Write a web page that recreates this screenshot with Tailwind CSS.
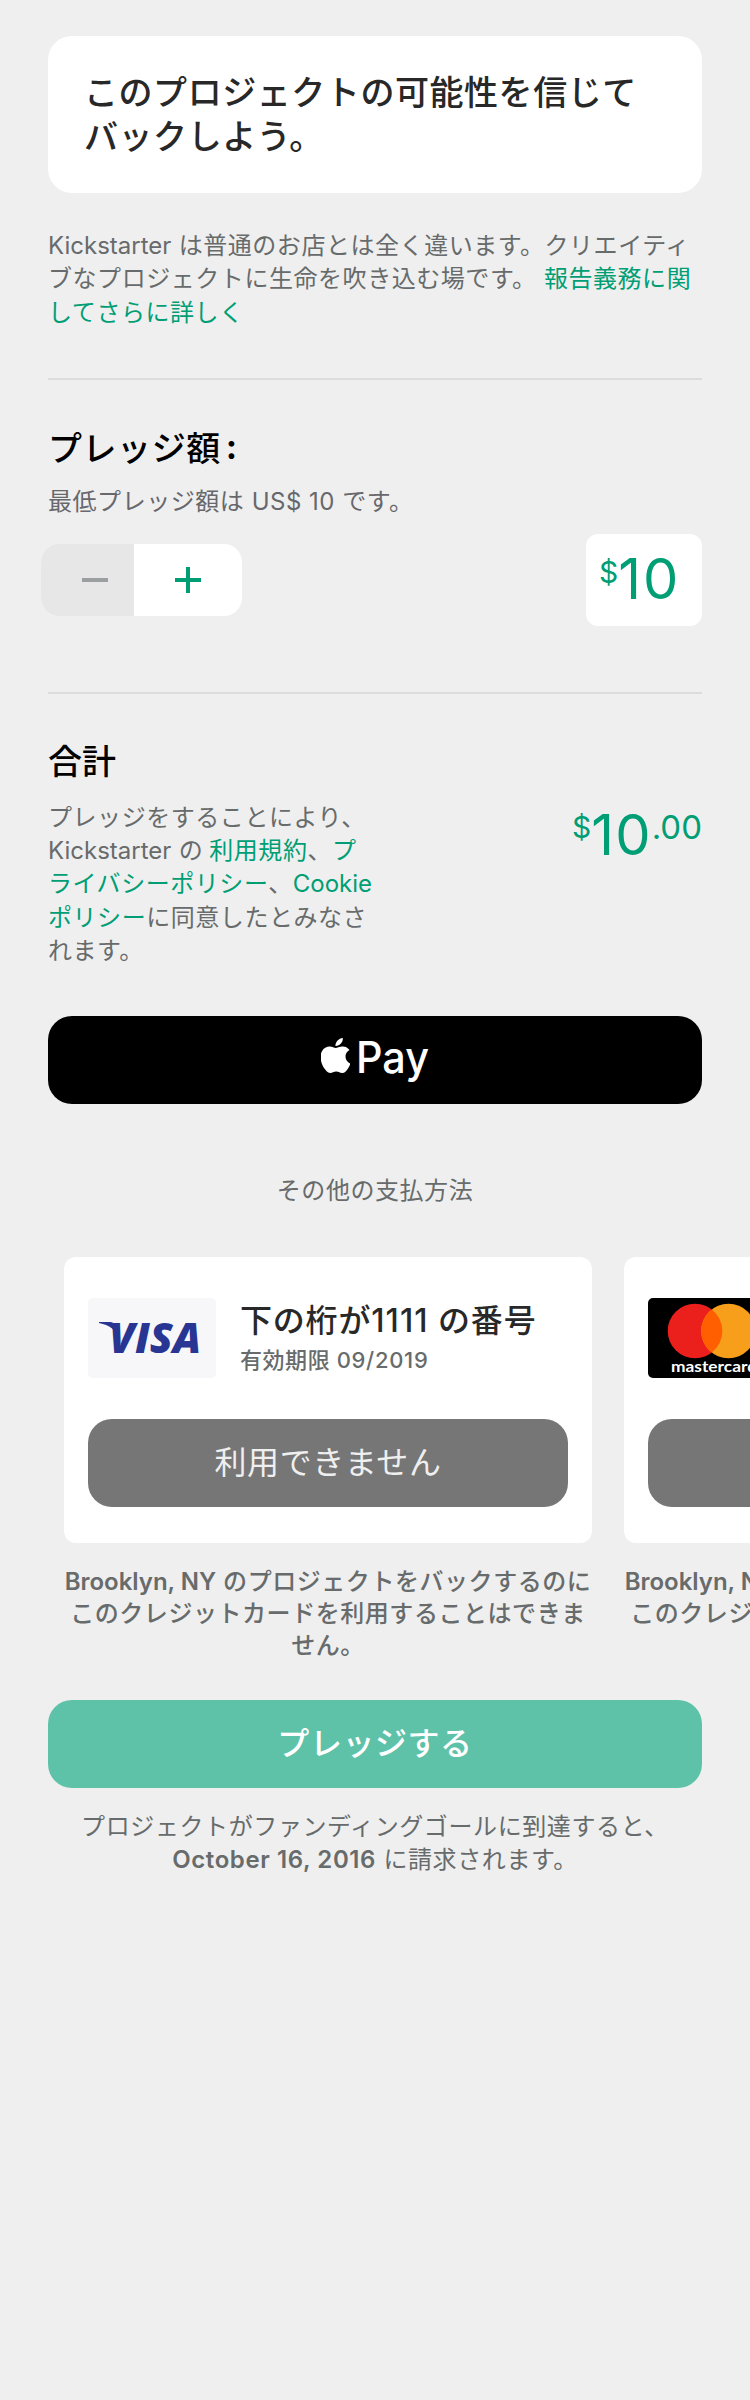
<!DOCTYPE html>
<html lang="ja">
<head>
<meta charset="utf-8">
<title>プレッジ</title>
<script src="https://cdn.jsdelivr.net/npm/@tailwindcss/browser@4"></script>
</head>
<body class="bg-[#efefef]">
<main class="w-[750px] h-[2400px] overflow-hidden bg-[#efefef] pt-9 font-['Inter','Noto_Sans_CJK_JP',sans-serif] text-2xl tracking-[0.55px] text-[#676b6b] whitespace-nowrap">
  <div class="px-12">
    <section class="h-[157px] rounded-3xl bg-white px-9 pt-[35px]">
      <h1 class="text-[34px] leading-[44px] font-medium text-[#282828]">このプロジェクトの可能性を信じて<br>バックしよう。</h1>
    </section>
    <p class="mt-9 leading-[33.3px]"><span class="tracking-[0px]">Kickstarter</span> は普通のお店とは全く違います。クリエイティ<br>ブなプロジェクトに生命を吹き込む場です。 <a class="text-[#009e74]">報告義務に関<br>してさらに詳しく</a></p>
    <hr class="mt-[49px] border-0 h-0.5 bg-[#dcdcdc]">

    <section class="h-[312px] pt-[47px]">
      <h2 class="text-[34px] leading-[44px] font-medium text-black">プレッジ額<span class="ml-[5px] inline-block -translate-y-0.5 font-bold">:</span></h2>
      <p class="mt-[14px] leading-[34px] text-[#67676c]">最低プレッジ額は <span class="tracking-[0.5px]">US$ 10</span> です。</p>
      <div class="mt-[15px] flex h-[92px] items-center justify-between">
        <div class="-ml-[7px] flex h-[72px] w-[201px] overflow-hidden rounded-[18px] bg-white">
          <button class="flex w-[93px] items-center bg-[#e7e7e7] pl-[41px]"><svg width="26" height="26"><path d="M0 13H26" stroke="#9b9f9f" stroke-width="4"/></svg></button>
          <button class="flex flex-1 items-center pl-[41px]"><svg width="26" height="26"><path d="M0 13H26M13 0V26" stroke="#009e74" stroke-width="4"/></svg></button>
        </div>
        <div class="flex h-[92px] w-[116px] items-start rounded-xl bg-white pl-[13px] pt-[17px] text-[#009e74] tracking-[0px]">
          <span class="text-[30px] leading-[42px]">$</span><span class="text-[56px] leading-[56px] tracking-[2px]">10</span>
        </div>
      </div>
    </section>
    <hr class="border-0 h-0.5 bg-[#dcdcdc]">

    <section class="h-[322px] pt-[46px]">
      <h2 class="text-[34px] leading-[44px] font-medium text-black tracking-[0px]">合計</h2>
      <div class="mt-[17px] flex justify-between">
        <p class="leading-[33.3px]">プレッジをすることにより、<br><span class="tracking-[0px]">Kickstarter</span> の<a class="ml-1.5 text-[#009e74]">利用規約</a>、<a class="text-[#009e74]">プ<br>ライバシーポリシー</a>、<a class="text-[#009e74]"><span class="tracking-[0px]">Cookie</span><br>ポリシー</a>に同意したとみなさ<br>れます。</p>
        <div class="flex items-start pt-[6px] text-[#009e74] tracking-[0px]">
          <span class="text-[30px] leading-[40px]">$</span><span class="text-[56px] leading-[56px] tracking-[1.2px]">10</span><span class="text-[33px] leading-[40px]">.00</span>
        </div>
      </div>
    </section>

    <button class="flex h-[88px] w-full items-start rounded-3xl bg-black pl-[273px] pt-[22px] text-white">
      <svg class="shrink-0" width="29" height="35" viewBox="2.5 0 19 24" preserveAspectRatio="none" fill="currentColor"><path d="M12.15 6.9c-.95 0-2.42-1.08-3.96-1.04-2.04.03-3.91 1.18-4.96 3.01-2.12 3.68-.55 9.1 1.52 12.09 1.01 1.45 2.21 3.09 3.79 3.04 1.52-.07 2.09-.99 3.94-.99 1.83 0 2.35.99 3.96.95 1.64-.03 2.68-1.48 3.68-2.95 1.16-1.69 1.64-3.32 1.66-3.41-.04-.01-3.18-1.22-3.22-4.86-.03-3.04 2.48-4.49 2.6-4.56-1.43-2.09-3.62-2.32-4.39-2.38-2-.16-3.68 1.09-4.61 1.09zM15.53 3.83c.84-1.01 1.4-2.43 1.25-3.83-1.21.05-2.66.81-3.53 1.82-.78.9-1.45 2.34-1.27 3.71 1.34.1 2.72-.69 3.56-1.7"/></svg>
      <svg class="shrink-0" width="84" height="48"><text x="6" y="35" font-size="44" font-weight="500" textLength="73" lengthAdjust="spacingAndGlyphs" letter-spacing="0" fill="currentColor">Pay</text></svg>
    </button>
    <p class="mt-[70px] text-center leading-[34px]">その他の支払方法</p>
  </div>

  <div class="mt-[49px] flex gap-8 pl-16">
    <article class="w-[528px] shrink-0">
      <div class="h-[286px] rounded-xl bg-white px-6 pt-[41px]">
        <div class="flex h-20 gap-6">
          <svg class="shrink-0" width="128" height="80"><rect width="128" height="80" rx="5" fill="#f7f7f9"/><path d="M11 24H22Q26 24 27 28L30 40Q27 28 11 25Z" fill="#283593"/><text x="21" y="55" font-family="Open Sans" font-weight="800" font-style="italic" font-size="43" letter-spacing="0" textLength="92" lengthAdjust="spacingAndGlyphs" fill="#283593">VISA</text></svg>
          <div>
            <h3 class="pt-px text-[32px] leading-[44px] font-medium text-[#282828] tracking-[0.8px]">下の桁が<span class="tracking-[1.1px]">1111</span> の番号</h3>
            <p class="mt-px text-[22px] leading-8 font-medium">有効期限 <span class="tracking-[0.7px]">09/2019</span></p>
          </div>
        </div>
        <button class="mt-[41px] h-[88px] w-[480px] rounded-3xl bg-[#767676] text-[32px] text-[#efefef]">利用できません</button>
      </div>
      <p class="mt-[23px] text-center leading-8 font-medium"><span class="font-semibold tracking-[0px]">Brooklyn, NY</span> のプロジェクトをバックするのに<br>このクレジットカードを利用することはできま<br>せん。</p>
    </article>
    <article class="w-[528px] shrink-0">
      <div class="h-[286px] rounded-xl bg-white px-6 pt-[41px]">
        <svg width="128" height="80"><rect width="128" height="80" rx="5" fill="#000"/><circle cx="47" cy="33" r="27.3" fill="#eb1f1b"/><circle cx="80.5" cy="33" r="27.3" fill="#f79f1a"/><path d="M63.75 11.4A27.3 27.3 0 0 1 63.75 54.6A27.3 27.3 0 0 1 63.75 11.4Z" fill="#ff5f00"/><text x="23" y="74" font-family="Lato" font-weight="700" font-size="15" letter-spacing="0" textLength="86" lengthAdjust="spacingAndGlyphs" fill="#fff">mastercard</text></svg>
        <button class="mt-[41px] h-[88px] w-[480px] rounded-3xl bg-[#767676] text-[32px] text-[#efefef]">利用できません</button>
      </div>
      <p class="mt-[23px] text-center leading-8 font-medium"><span class="font-semibold tracking-[0px]">Brooklyn, NY</span> のプロジェクトをバックするのに<br>このクレジットカードを利用することはできま<br>せん。</p>
    </article>
  </div>

  <div class="mt-[38px] px-12">
    <button class="block h-[88px] w-full rounded-3xl bg-[#5ec2a9] text-[32px] font-medium text-white">プレッジする</button>
    <p class="mt-[22px] text-center leading-[33px] tracking-[0.6px]">プロジェクトがファンディングゴールに到達すると、<br><span class="font-semibold tracking-[0.6px]">October 16, 2016</span> に請求されます。</p>
  </div>
</main>
</body>
</html>
